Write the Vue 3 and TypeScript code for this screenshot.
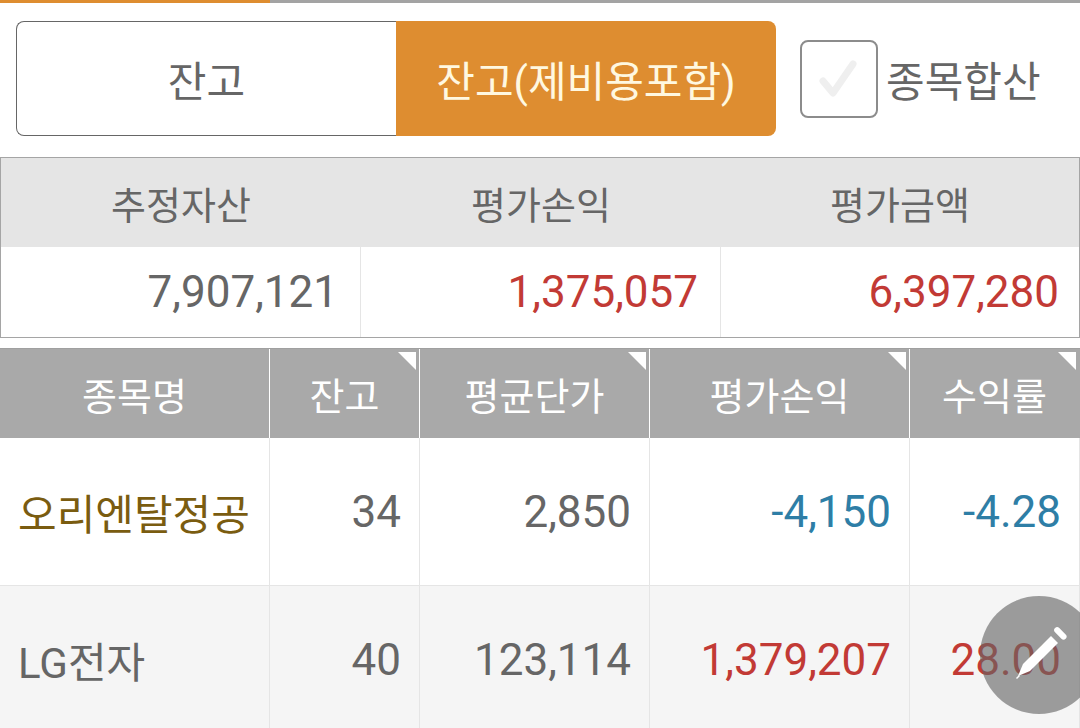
<script setup lang="ts">
interface StockRow {
    name: string;
    qty: string;
    avg: string;
    pnl: string;
    rate: string;
    tone: "up" | "down";
}

const summary = [
    { label: "추정자산", value: "7,907,121", tone: "" },
    { label: "평가손익", value: "1,375,057", tone: "up" },
    { label: "평가금액", value: "6,397,280", tone: "up" },
];

const columns = [
    { label: "종목명", marked: false },
    { label: "잔고", marked: true },
    { label: "평균단가", marked: true },
    { label: "평가손익", marked: true },
    { label: "수익률", marked: true },
];

const rows: StockRow[] = [
    { name: "오리엔탈정공", qty: "34", avg: "2,850", pnl: "-4,150", rate: "-4.28", tone: "down" },
    { name: "LG전자", qty: "40", avg: "123,114", pnl: "1,379,207", rate: "28.00", tone: "up" },
];
</script>

<template>
    <div class="page">
        <div class="progress"><div class="progress-fill"></div></div>

        <div class="toolbar">
            <div class="tabs">
                <div class="tab">잔고</div>
                <div class="tab tab-active">잔고(제비용포함)</div>
            </div>
            <label class="merge">
                <span class="checkbox">
                    <svg width="44" height="44" viewBox="0 0 44 44" fill="none">
                        <path d="M6 24 L16 36 L36 7" stroke="#efefef" stroke-width="7" stroke-linecap="round" stroke-linejoin="round" />
                    </svg>
                </span>
                <span class="merge-label">종목합산</span>
            </label>
        </div>

        <div class="summary">
            <div v-for="item in summary" :key="item.label" class="summary-head">{{ item.label }}</div>
            <div v-for="item in summary" :key="item.value" class="summary-value" :class="item.tone">{{ item.value }}</div>
        </div>

        <div class="grid">
            <div v-for="col in columns" :key="col.label" class="grid-head">
                {{ col.label }}
                <span v-if="col.marked" class="corner"></span>
            </div>
            <template v-for="(row, i) in rows" :key="row.name">
                <div class="cell cell-name" :class="[i % 2 ? 'alt' : 'first']">{{ row.name }}</div>
                <div class="cell" :class="{ alt: i % 2 }">{{ row.qty }}</div>
                <div class="cell" :class="{ alt: i % 2 }">{{ row.avg }}</div>
                <div class="cell" :class="[row.tone, { alt: i % 2 }]">{{ row.pnl }}</div>
                <div class="cell" :class="[row.tone, { alt: i % 2 }]">{{ row.rate }}</div>
            </template>
        </div>

        <button class="fab" type="button">
            <svg width="64" height="64" viewBox="0 0 64 64" fill="#fff">
                <path d="M44 13 L51 20 L23 48 L11 53 L16 41 Z" />
                <path d="M9 55 L12 52 L13 53 L10 56 Z" />
                <rect x="46" y="7" width="15" height="6" rx="3" transform="rotate(45 53 10)" />
            </svg>
        </button>
    </div>
</template>

<style scoped>
.page {
    position: relative;
    width: 1080px;
    height: 728px;
    overflow: hidden;
    background: #fff;
    color: #666;
    font-family: Roboto, "Noto Sans CJK KR", sans-serif;
}

.progress {
    height: 3px;
    background: #a3a3a3;
}

.progress-fill {
    width: 270px;
    height: 3px;
    background: #de8d30;
}

.toolbar {
    display: flex;
    align-items: center;
    height: 115px;
    margin-top: 18px;
    padding-left: 16px;
}

.tabs {
    display: grid;
    grid-template-columns: 380px 380px;
    width: 760px;
    height: 115px;
    font-size: 42px;
}

.tab {
    display: flex;
    align-items: center;
    justify-content: center;
    border: 1px solid #666;
    border-right: 0;
    border-radius: 8px 0 0 8px;
    background: #fff;
}

.tab-active {
    border: 0;
    border-radius: 0 8px 8px 0;
    background: #de8d30;
    color: #fff8e0;
}

.merge {
    display: flex;
    align-items: center;
    gap: 8px;
    margin-left: 24px;
    font-size: 42px;
}

.checkbox {
    display: flex;
    align-items: center;
    justify-content: center;
    box-sizing: border-box;
    width: 78px;
    height: 78px;
    border: 2px solid #8c8c8c;
    border-radius: 8px;
}

.summary {
    display: grid;
    grid-template-columns: 360px 360px 358px;
    margin-top: 21px;
    border: 1px solid #a5a5a5;
    border-width: 1px;
    height: 179px;
    box-sizing: content-box;
    width: 1078px;
}

.summary-head {
    display: flex;
    align-items: center;
    justify-content: center;
    height: 89px;
    background: #e5e5e5;
    font-size: 38px;
}

.summary-value {
    display: flex;
    align-items: center;
    justify-content: flex-end;
    height: 90px;
    padding-right: 22px;
    font-size: 44px;
    border-right: 1px solid #e5e5e5;
    box-sizing: border-box;
}

.summary-value:last-child {
    padding-right: 20px;
    border-right: 0;
}

.grid {
    display: grid;
    grid-template-columns: 270px 150px 230px 260px 170px;
    grid-template-rows: 89px 148px 148px;
    margin-top: 10px;
    border-top: 1px solid #a0a0a0;
}

.grid-head {
    position: relative;
    display: flex;
    align-items: center;
    justify-content: center;
    box-sizing: border-box;
    background: #a9a9a9;
    color: #fff;
    font-size: 38px;
    border-right: 1px solid #fff;
}

.grid-head:nth-child(5) {
    border-right: 1px solid #a9a9a9;
}

.corner {
    position: absolute;
    top: 3px;
    right: 3px;
    width: 0;
    height: 0;
    border-top: 18px solid #fff;
    border-left: 18px solid transparent;
}

.cell {
    display: flex;
    align-items: center;
    justify-content: flex-end;
    box-sizing: border-box;
    padding-right: 18px;
    font-size: 44px;
    border-right: 1px solid #e5e5e5;
    border-bottom: 1px solid #e5e5e5;
}

.cell-name {
    justify-content: flex-start;
    padding: 0 0 0 18px;
    font-size: 42px;
    white-space: nowrap;
}

.first {
    color: #7a5c10;
}

.alt {
    background: #f5f5f5;
}

.up {
    color: #c23a35;
}

.down {
    color: #2e7ea6;
}

.fab {
    position: absolute;
    top: 596px;
    left: 980px;
    display: flex;
    align-items: center;
    justify-content: center;
    width: 118px;
    height: 118px;
    padding: 0;
    border: 0;
    border-radius: 50%;
    background: rgba(100, 100, 100, 0.62);
}
</style>

<style>
html,
body {
    margin: 0;
    overflow: hidden;
}
</style>
